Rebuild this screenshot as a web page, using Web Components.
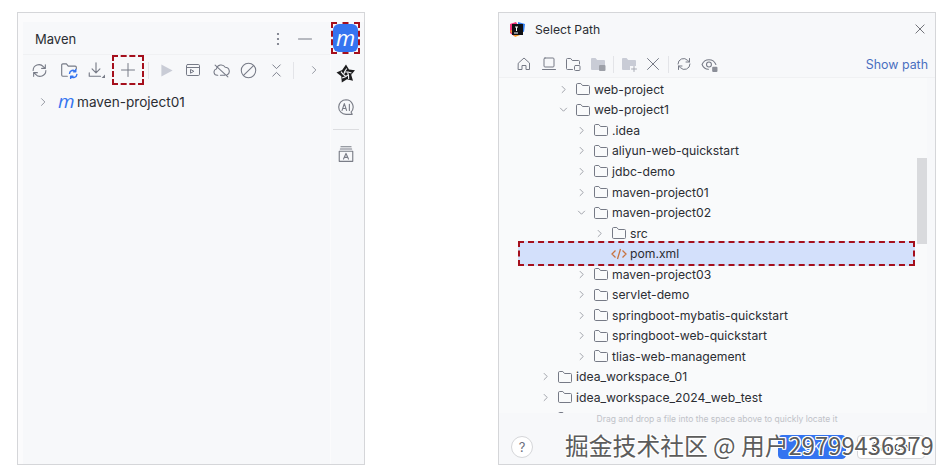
<!DOCTYPE html>
<html>
<head>
<meta charset="utf-8">
<style>
  html, body { margin: 0; height: 100%; background: #fff; }
  body { font-family: Inter, "Noto Sans CJK SC", sans-serif; overflow: hidden; }
</style>
</head>
<body>
<shot-page>
  <maven-panel></maven-panel>
  <select-path></select-path>
</shot-page>

<script>
// shared icon set, all on a 16x16 grid
const ICONS = {
  refresh: '<path d="M2 8a5.5 5.5 0 0 1 9.6-3.6L13.5 6M14 8a5.5 5.5 0 0 1-9.6 3.6L2.5 10M13.5 2.5V6H10M2.5 13.5V10H6"/>',
  folderSync: '<path d="M6.5 13.5h-4a1 1 0 0 1-1-1v-9a1 1 0 0 1 1-1h3.2l1.6 2h6.2a1 1 0 0 1 1 1V7"/><path stroke="#3574f0" stroke-width="1.3" d="M8.5 11a3 3 0 0 1 5.3-1.6M15 12a3 3 0 0 1-5.3 1.6M14 7.5v2h-2M9.5 15.5v-2h2"/>',
  download: '<path d="M8 1.5V10M4.5 7L8 10.5 11.5 7M2 10.5v3h10"/><path fill="#767a86" stroke="none" d="M16 12v3h-3z"/>',
  plus: '<path d="M8 1.5v13M1.5 8h13"/>',
  play: '<path fill="#c9ccd6" stroke="none" d="M2.5 1.5v13L14.5 8z"/>',
  runWindow: '<rect x="1.5" y="2.5" width="13" height="11" rx="1.2"/><path d="M1.5 5.5h13M5.5 7.8v3.4L8.5 9.5z"/>',
  cloudOff: '<path d="M4.5 12.5H4a3 3 0 0 1-.8-5.9 4.5 4.5 0 0 1 8.3-1.6A3.8 3.8 0 0 1 13 12.3M7 12.5h4M2 3l12 11"/>',
  ban: '<circle cx="8" cy="8" r="6.8"/><path d="M3.3 12.7l9.4-9.4"/>',
  collapse: '<path d="M4 2l4 4 4-4M4 14l4-4 4 4"/>',
  chevronRight: '<path d="M6 3.5L10.5 8 6 12.5"/>',
  chevronDown: '<path d="M3.5 6L8 10.5 12.5 6"/>',
  kebab: '<g fill="#6c707e" stroke="none"><circle cx="8" cy="3" r="1.1"/><circle cx="8" cy="8" r="1.1"/><circle cx="8" cy="13" r="1.1"/></g>',
  minus: '<path d="M1.5 8h13"/>',
  close: '<path d="M2.5 2.5l11 11M13.5 2.5l-11 11"/>',
  folder: '<path d="M1.5 3.5a1 1 0 0 1 1-1h3.3l1.7 2h6a1 1 0 0 1 1 1v7a1 1 0 0 1-1 1h-11a1 1 0 0 1-1-1z"/>',
  home: '<path d="M2.5 7L8 2l5.5 5v6.5H10V9.5H6v4H2.5z"/>',
  desktop: '<rect x="3" y="2" width="10" height="9" rx="1"/><path d="M1.5 13.5h13"/>',
  folderBadge: '<path d="M7.5 13.5h-5a1 1 0 0 1-1-1v-9a1 1 0 0 1 1-1h3.2l1.6 2h6.2a1 1 0 0 1 1 1V8"/><rect x="9.5" y="9.5" width="5.5" height="5" rx="1"/>',
  folderGrey: '<path fill="#c9ccd6" stroke="none" d="M1 3a1 1 0 0 1 1-1h3.5l1.7 2H14a1 1 0 0 1 1 1v8a1 1 0 0 1-1 1H2a1 1 0 0 1-1-1z"/><rect fill="#9da0a8" stroke="none" x="9" y="9" width="6.5" height="6" rx="1"/>',
  folderPlus: '<path fill="#c9ccd6" stroke="none" d="M1 3a1 1 0 0 1 1-1h3.5l1.7 2H14a1 1 0 0 1 1 1v5H9v4H2a1 1 0 0 1-1-1z"/><path stroke="#a8abb5" d="M13 10.5v5M10.5 13h5"/>',
  eyeBadge: '<path d="M7 12.5C4 12.5 1.8 10 1 8c.8-2 3-4.5 6.5-4.5S13.2 6 14 8"/><circle cx="7.5" cy="8" r="2.3"/><rect fill="#8b8e98" stroke="none" x="10.5" y="10" width="5" height="5" rx="1"/>',
  aiChat: '<path d="M8 1.5a6.5 6.5 0 1 0 0 13h5.5l-1-2A6.5 6.5 0 0 0 8 1.5z"/><path d="M4.5 11l2-6 2 6M5.2 9.3h2.6M11 5.5V11"/>',
  book: '<path d="M3 3.5h10M3.5 1.5h9M2 5.5h12v9H2z"/><path d="M5.8 12.5L8 7.5l2.2 5M6.6 11h2.8"/>'
};

// one icon: name + size attributes
class IdeIcon extends HTMLElement {
  connectedCallback() {
    const size = this.getAttribute('size') || 16;
    const color = this.getAttribute('color') || '#767a86';
    const sw = this.getAttribute('sw') || 1;
    this.attachShadow({ mode: 'open' }).innerHTML = `
      <style>
        :host { display: inline-flex; flex: none; width: ${size}px; height: ${size}px; }
        svg { display: block; width: 100%; height: 100%; fill: none; stroke: ${color}; stroke-width: ${sw}; stroke-linejoin: round; stroke-linecap: round; }
      </style>
      <svg viewBox="0 0 16 16">${ICONS[this.getAttribute('name')]}</svg>`;
  }
}
customElements.define('ide-icon', IdeIcon);

// the dark red dashed frame used for callouts
class MarkBox extends HTMLElement {
  constructor() {
    super();
    this.attachShadow({ mode: 'open' }).innerHTML = `
      <style>
        :host { display: flex; align-items: center; justify-content: center; box-sizing: border-box; border: 2px dashed #a50f1c; }
      </style>
      <slot></slot>`;
  }
}
customElements.define('mark-box', MarkBox);

class ShotPage extends HTMLElement {
  constructor() {
    super();
    this.attachShadow({ mode: 'open' }).innerHTML = `
      <style>
        :host { display: flex; justify-content: space-between; box-sizing: border-box; height: 475px; padding: 12px 14px 10px 17px; }
      </style>
      <slot></slot>`;
  }
}
customElements.define('shot-page', ShotPage);

class MavenPanel extends HTMLElement {
  constructor() {
    super();
    this.attachShadow({ mode: 'open' }).innerHTML = `
      <style>
        :host { display: flex; box-sizing: border-box; width: 348px; border: 1px solid #d5d6d9; background: #fbfbfc; padding: 9px 0 0 5px; }
        .main { flex: 1; min-width: 0; display: flex; flex-direction: column; background: #f7f8fa; }
        .title { display: flex; align-items: center; box-sizing: border-box; height: 33px; padding: 1px 17px 0 12px; border-bottom: 1px solid #f0f1f3; font-size: 13px; color: #2b2d33; }
        .title span { flex: 1; }
        .title ide-icon + ide-icon { margin-left: 11px; }
        .tools { display: flex; align-items: center; height: 30px; padding-left: 8px; }
        .sep { width: 1px; height: 17px; background: #e3e4e8; }
        .plus { width: 32px; height: 30px; margin-left: -1px; margin-right: 4px; }
        .root { display: flex; align-items: center; height: 20px; margin-top: 7px; padding-left: 14px; font-size: 13.6px; color: #2b2d33; }
        .m { font: italic 400 19px/20px "Open Sans", sans-serif; color: #3574f0; margin: -3px 4px 0 9px; width: 15px; }
        .side { box-sizing: border-box; width: 33px; padding-right: 4px; display: flex; flex-direction: column; align-items: center; background: #f7f8fa; margin-left: 1px; }
        .logo-mark { flex: none; width: 29px; height: 32px; margin-bottom: 10px; }
        .logo { width: 25px; height: 28px; background: #3574f0; border-radius: 6px; display: flex; align-items: center; justify-content: center; color: #fff; font: italic 400 22px/22px "Open Sans", sans-serif; padding-bottom: 3px; box-sizing: border-box; }
        .rule { width: 26px; height: 1px; background: #dcdde0; margin: 13px 0 15px; flex: none; }
        .side svg { display: block; flex: none; }
      </style>
      <div class="main">
        <div class="title">
          <span>Maven</span>
          <ide-icon name="kebab" size="16"></ide-icon>
          <ide-icon name="minus" size="16"></ide-icon>
        </div>
        <div class="tools">
          <ide-icon name="refresh" size="17" style="margin-right:11.5px"></ide-icon>
          <ide-icon name="folderSync" size="18" style="margin-right:9px"></ide-icon>
          <ide-icon name="download" size="18" style="margin-right:8px"></ide-icon>
          <mark-box class="plus"><ide-icon name="plus" size="16"></ide-icon></mark-box>
          <div class="sep" style="margin-right:10px"></div>
          <ide-icon name="play" size="15" style="margin-right:11.5px"></ide-icon>
          <ide-icon name="runWindow" size="16" style="margin-right:11.5px"></ide-icon>
          <ide-icon name="cloudOff" size="17" style="margin-right:10px"></ide-icon>
          <ide-icon name="ban" size="17" style="margin-right:12px"></ide-icon>
          <ide-icon name="collapse" size="15" style="margin-right:9.5px"></ide-icon>
          <div class="sep" style="margin-right:14px"></div>
          <ide-icon name="chevronRight" size="12"></ide-icon>
        </div>
        <div class="root">
          <ide-icon name="chevronRight" size="12"></ide-icon>
          <span class="m">m</span>
          <span>maven-project01</span>
        </div>
      </div>
      <div class="side">
        <mark-box class="logo-mark"><div class="logo">m</div></mark-box>
        <svg width="20" height="20" viewBox="0 0 20 20">
          <path fill="#1d1d1f" d="M10 .5l3 5 6 .7-3.8 4.6 1.800 6-6-1.600-5.200 3.300-.5-6.200L.5 8.500l5.700-2.400z"/>
          <g fill="none" stroke="#f7f8fa" stroke-width="1.1">
            <path id="slit" d="M9 8h3l3.500 1"/>
            <use href="#slit" transform="rotate(72 10 10)"/>
            <use href="#slit" transform="rotate(144 10 10)"/>
            <use href="#slit" transform="rotate(216 10 10)"/>
            <use href="#slit" transform="rotate(288 10 10)"/>
          </g>
        </svg>
        <ide-icon name="aiChat" size="18" color="#7a7d87" style="margin-top:14px"></ide-icon>
        <div class="rule"></div>
        <ide-icon name="book" size="18" color="#7a7d87"></ide-icon>
      </div>`;
  }
}
customElements.define('maven-panel', MavenPanel);

// one row in the path tree; depth in levels, chevron is open|closed|none
class TreeRow extends HTMLElement {
  connectedCallback() {
    const depth = +this.getAttribute('depth');
    const chevron = this.getAttribute('chevron');
    const chevronName = chevron === 'open' ? 'chevronDown' : 'chevronRight';
    this.attachShadow({ mode: 'open' }).innerHTML = `
      <style>
        :host { display: flex; align-items: center; height: 20.55px; font-size: 12.2px; color: #2b2d33; white-space: nowrap; padding-left: ${depth * 18 + 13}px; }
        .chev { width: 12px; margin-right: 6px; display: flex; justify-content: center; }
        ide-icon[name=folder] { margin-right: 3px; }
        .xml { flex: none; margin-right: 3px; }
      </style>
      <span class="chev">${chevron ? `<ide-icon name="${chevronName}" size="11" color="#7a7d87"></ide-icon>` : ''}</span>
      ${this.hasAttribute('xml')
        ? `<svg class="xml" width="16" height="16" viewBox="0 0 16 16" fill="none" stroke="#c8733f" stroke-width="1.3"><path d="M4.5 4.5L1 8l3.5 3.5M11.5 4.5L15 8l-3.5 3.5M9.500 3l-3 10"/></svg>`
        : `<ide-icon name="folder" size="16"></ide-icon>`}
      <slot></slot>`;
  }
}
customElements.define('tree-row', TreeRow);

class SelectPath extends HTMLElement {
  constructor() {
    super();
    const rows = [
      [2, 'closed', 'web-project'], [2, 'open', 'web-project1'], [3, 'closed', '.idea'],
      [3, 'closed', 'aliyun-web-quickstart'], [3, 'closed', 'jdbc-demo'], [3, 'closed', 'maven-project01'],
      [3, 'open', 'maven-project02'], [4, 'closed', 'src'], [4, '', 'pom.xml'],
      [3, 'closed', 'maven-project03'], [3, 'closed', 'servlet-demo'], [3, 'closed', 'springboot-mybatis-quickstart'],
      [3, 'closed', 'springboot-web-quickstart'], [3, 'closed', 'tlias-web-management'],
      [1, 'closed', 'idea_workspace_01'], [1, 'closed', 'idea_workspace_2024_web_test'], [1, 'closed', '']
    ];
    const treeHtml = rows.map(([depth, chevron, label]) => {
      const row = `<tree-row depth="${depth}" chevron="${chevron}" ${label === 'pom.xml' ? 'xml' : ''}>${label}</tree-row>`;
      return label === 'pom.xml' ? `<mark-box class="picked">${row}</mark-box>` : row;
    }).join('');
    this.attachShadow({ mode: 'open' }).innerHTML = `
      <style>
        :host { display: flex; flex-direction: column; position: relative; box-sizing: border-box; width: 438px; border: 1px solid #d5d6d9; background: #f7f8fa; font-size: 13px; color: #2b2d33; }
        .head { display: flex; align-items: center; height: 32px; padding: 0 9px 0 10px; }
        .head span { flex: 1; margin-left: 9px; font-size: 12.2px; }
        .tools { display: flex; align-items: center; box-sizing: border-box; height: 33px; padding: 6px 7px 0 17px; border-bottom: 1px solid #f0f1f3; }
        .tools ide-icon { margin-right: 8.5px; }
        .tools .last { margin-right: 7px; }
        .sep { width: 1px; height: 17px; background: #e3e4e8; margin-right: 7px; }
        .show { margin-left: auto; color: #4a6fc0; font-size: 12.4px; }
        .tree { position: relative; height: 335px; margin-right: 8px; overflow: hidden; background: #f9fafb; padding: 1px 0 0 9px; box-sizing: border-box; }
        .picked { background: #d3e0fb; height: 24.55px; margin: -2px 12px -2px 10px; justify-content: flex-start; position: relative; z-index: 1; }
        .picked tree-row { margin-left: -12px; }
        .thumb { position: absolute; right: 0; top: 80px; width: 10px; height: 86px; background: #d9dadd; }
        .hint { text-align: center; font-size: 8.5px; color: #c0c2c8; margin-top: -1px; height: 14px; line-height: 14px; }
        .foot { display: flex; align-items: center; padding: 9px 10px 0 12px; }
        .help { width: 22px; height: 22px; box-sizing: border-box; border: 1px solid #d5d6d9; border-radius: 50%; background: #fff; text-align: center; line-height: 20px; color: #6c707e; font-size: 13px; }
        .btn { width: 68px; height: 24px; box-sizing: border-box; border-radius: 4px; text-align: center; line-height: 22px; font-size: 12px; }
        .ok { margin-left: auto; background: #3574f0; color: #fff; border: 1px solid #3574f0; }
        .cancel { margin-left: 11px; background: #fff; border: 1px solid #d5d6d9; }
        .mark { position: absolute; left: 66px; top: 417px; font: 400 23.8px/30px "Noto Sans CJK SC", sans-serif; color: #5c5c5c; white-space: nowrap; text-shadow: 1px 0 #fff, -1px 0 #fff, 0 1px #fff, 0 -1px #fff, 1px 1px #fff, -1px -1px #fff, 1px -1px #fff, -1px 1px #fff; }
      </style>
      <div class="head">
        <svg width="17" height="17" viewBox="0 0 17 17">
          <path fill="#f4327a" d="M1 3l6-2 3 5-5 9-4-3z"/><path fill="#f59b2a" d="M1 10l5 6 5-2-6-6z"/><path fill="#2f7df0" d="M9 1l7 2-1 8-6-2z"/><rect x="3" y="3" width="11" height="11" fill="#101014"/><path stroke="#fff" d="M6 6h3M7.5 6v4M5 12h4" fill="none"/>
        </svg>
        <span>Select Path</span>
        <ide-icon name="close" size="12" color="#45474f"></ide-icon>
      </div>
      <div class="tools">
        <ide-icon name="home" size="16"></ide-icon>
        <ide-icon name="desktop" size="16"></ide-icon>
        <ide-icon name="folderBadge" size="16"></ide-icon>
        <ide-icon name="folderGrey" size="16" class="last"></ide-icon>
        <div class="sep"></div>
        <ide-icon name="folderPlus" size="16"></ide-icon>
        <ide-icon name="close" size="16" class="last"></ide-icon>
        <div class="sep"></div>
        <ide-icon name="refresh" size="16"></ide-icon>
        <ide-icon name="eyeBadge" size="17"></ide-icon>
        <a class="show">Show path</a>
      </div>
      <div class="tree">
        <div class="rows">${treeHtml}</div>
        <div class="thumb"></div>
      </div>
      <div class="hint">Drag and drop a file into the space above to quickly locate it</div>
      <div class="foot">
        <div class="help">?</div>
        <div class="btn ok">OK</div>
        <div class="btn cancel">Cancel</div>
      </div>
      <div class="mark">掘金技术社区 @ 用户29799436379</div>`;
  }
}
customElements.define('select-path', SelectPath);
</script>
</body>
</html>
